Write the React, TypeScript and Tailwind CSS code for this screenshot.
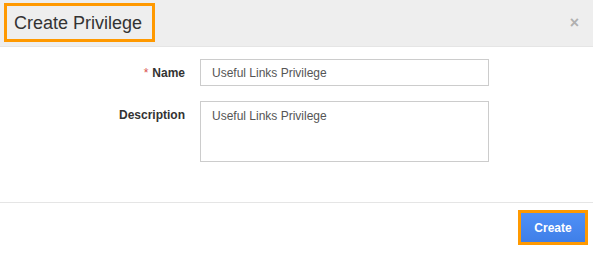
export default function App() {
  return (
    <div className="flex h-[253px] w-[593px] flex-col bg-white font-['Liberation_Sans',Arial,sans-serif] text-[#333]">
      <div className="flex h-[47px] shrink-0 items-start justify-between border-b border-[#e5e5e5] bg-[#eeeeee] pl-1 pr-[14px] pt-[3px]">
        <div className="flex h-[39px] items-center border-[3px] border-[#ff9900] pl-[7px] pr-[10px]">
          <h3 className="text-[18px] leading-none text-[#333]">Create Privilege</h3>
        </div>
        <button className="mt-[12px] text-[16px] font-bold leading-none text-[#b0b0b0]">×</button>
      </div>

      <div className="flex flex-col gap-[15px] pt-[12px]">
        <div className="flex items-center">
          <label className="w-[185px] pr-0 text-right text-[12px] font-bold">
            <span className="mr-[4px] text-[#d9534f] font-normal">*</span>Name
          </label>
          <div className="ml-[15px] flex h-[27px] w-[289px] items-center border border-[#cccccc] px-[11px] text-[12px] text-[#555]">
            Useful Links Privilege
          </div>
        </div>
        <div className="flex items-start">
          <label className="w-[185px] pt-[5px] text-right text-[12px] font-bold">Description</label>
          <div className="ml-[15px] h-[61px] w-[289px] border border-[#cccccc] px-[11px] pt-[5px] text-[12px] text-[#555]">
            Useful Links Privilege
          </div>
        </div>
      </div>

      <div className="mt-[40px] flex justify-end border-t border-[#e5e5e5] pr-[5px] pt-[7px]">
        <div className="border-[3px] border-[#ff9900]">
          <button className="flex h-[29px] w-[64px] items-center justify-center bg-gradient-to-b from-[#4f90f7] to-[#3f7fe8] text-[12px] font-bold text-white">
            Create
          </button>
        </div>
      </div>
    </div>
  );
}
